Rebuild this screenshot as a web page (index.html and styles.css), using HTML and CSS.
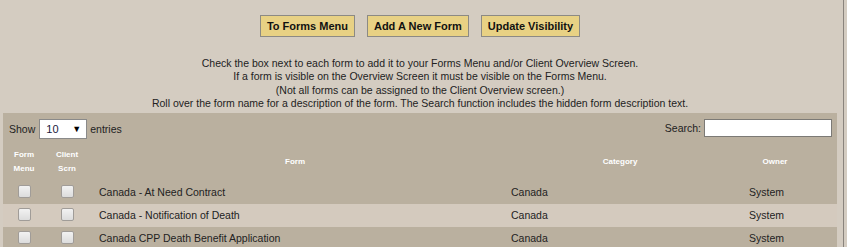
FILE: index.html
```html
<!DOCTYPE html>
<html lang="en">

<head>
  <meta charset="UTF-8" />
  <meta name="viewport" content="width=device-width,initial-scale=1" />
  <title>Forms Menu Setup</title>
  <link rel="stylesheet" href="styles.css">
</head>

<body>
  <div class="frame">
    <div class="actions">
      <button class="btn" type="button">To Forms Menu</button>
      <button class="btn" type="button">Add A New Form</button>
      <button class="btn" type="button">Update Visibility</button>
    </div>

    <div class="notes">
      <p>Check the box next to each form to add it to your Forms Menu and/or Client Overview Screen.</p>
      <p>If a form is visible on the Overview Screen it must be visible on the Forms Menu.</p>
      <p>(Not all forms can be assigned to the Client Overview screen.)</p>
      <p>Roll over the form name for a description of the form. The Search function includes the hidden form description text.</p>
    </div>

    <div class="panel">
      <div class="toolbar">
        <div class="length">Show <span class="select"><span>10</span><span class="caret">&#9660;</span></span> entries</div>
        <div class="search">Search: <input type="text" /></div>
      </div>

      <table class="forms">
        <colgroup>
          <col class="c-menu">
          <col class="c-scrn">
          <col class="c-form">
          <col class="c-cat">
          <col class="c-owner">
          <col class="c-rest">
        </colgroup>
        <thead>
          <tr>
            <th>Form<br>Menu</th>
            <th>Client<br>Scrn</th>
            <th>Form</th>
            <th>Category</th>
            <th>Owner</th>
            <th></th>
          </tr>
        </thead>
        <tbody>
          <tr>
            <td class="chk"><input type="checkbox" /></td>
            <td class="chk"><input type="checkbox" /></td>
            <td>Canada - At Need Contract</td>
            <td>Canada</td>
            <td>System</td>
            <td></td>
          </tr>
          <tr class="alt">
            <td class="chk"><input type="checkbox" /></td>
            <td class="chk"><input type="checkbox" /></td>
            <td>Canada - Notification of Death</td>
            <td>Canada</td>
            <td>System</td>
            <td></td>
          </tr>
          <tr>
            <td class="chk"><input type="checkbox" /></td>
            <td class="chk"><input type="checkbox" /></td>
            <td>Canada CPP Death Benefit Application</td>
            <td>Canada</td>
            <td>System</td>
            <td></td>
          </tr>
        </tbody>
      </table>
    </div>
  </div>
</body>

</html>
```

FILE: styles.css
```css
* {
  box-sizing: border-box;
  margin: 0;
  padding: 0;
}

body {
  font-family: "Liberation Sans", Arial, sans-serif;
  font-size: 10.5px;
  color: #222;
  background: #d4ccc1;
  overflow: hidden;
}

.frame {
  width: 844px;
  min-height: 100vh;
  padding: 15px 6px 0 3px;
  border-right: 1px solid #8a847d;
}

.actions {
  display: flex;
  justify-content: center;
  gap: 12px;
}

.btn {
  height: 22px;
  padding: 0 6px;
  background: #e8d184;
  border: 1px solid #8c8a84;
  font-family: inherit;
  font-size: 11px;
  font-weight: bold;
  color: #111;
}

.notes {
  margin-top: 20px;
  text-align: center;
  line-height: 13.4px;
}

.panel {
  margin-top: 2px;
  background: #bab09f;
}

.toolbar {
  display: flex;
  justify-content: space-between;
  align-items: flex-start;
  padding: 6px 5px 0 6px;
}

.length,
.search {
  display: flex;
  align-items: center;
  height: 20px;
}

.select {
  display: inline-flex;
  align-items: center;
  justify-content: space-between;
  width: 48px;
  height: 20px;
  margin: 0 3px 0 4px;
  padding: 0 5px 0 6px;
  background: #fff;
  border: 1px solid #8a8a8a;
  color: #1a1a40;
  font-size: 11px;
}

.caret {
  font-size: 9px;
  color: #000;
}

.search {
  height: 18px;
}

.search input {
  width: 128px;
  height: 18px;
  margin-left: 3px;
  border: 1px solid #7c7a76;
  background: #fff;
}

.forms {
  width: 100%;
  margin-top: 4px;
  border-collapse: collapse;
  table-layout: fixed;
}

.c-menu { width: 42px; }
.c-scrn { width: 44px; }
.c-form { width: 412px; }
.c-cat { width: 238px; }
.c-owner { width: 72px; }
.c-rest { width: 26px; }

.forms th {
  padding: 5px 0;
  font-size: 8px;
  font-weight: bold;
  line-height: 14px;
  color: #fff;
  text-align: center;
}

.forms td {
  height: 23px;
  padding: 0 0 0 10px;
  white-space: nowrap;
}

.forms td.chk {
  padding: 0;
  text-align: center;
}

.forms tr.alt td {
  background: #d4cabe;
}

.forms input[type="checkbox"] {
  appearance: none;
  display: inline-block;
  vertical-align: middle;
  width: 13px;
  height: 13px;
  margin-top: -2px;
  border: 1px solid #a09c98;
  border-radius: 2px;
  background: linear-gradient(#f2f2f2, #dcdcdc);
}
```
